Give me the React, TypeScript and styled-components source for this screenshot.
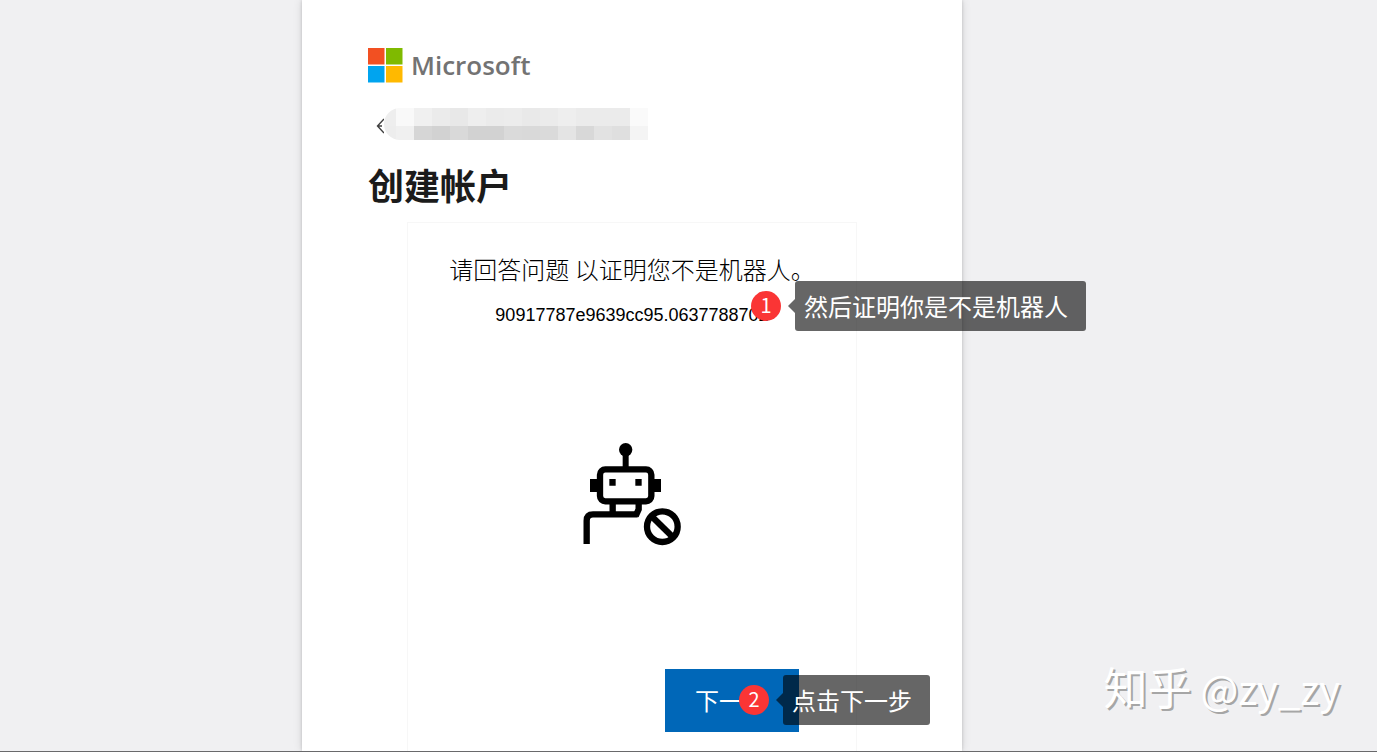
import React from "react";
import styled, { createGlobalStyle } from "styled-components";

const GlobalStyle = createGlobalStyle`
  *, *::before, *::after { box-sizing: border-box; }
  body {
    margin: 0;
    background: #f0f0f2;
    font-family: "Noto Sans CJK SC", "Noto Sans", sans-serif;
    color: #1b1b1b;
  }
`;

const Page = styled.div`
  position: relative;
  display: grid;
  grid-template-columns: 302fr minmax(auto, 660px) 415fr;
  min-height: 100vh;
  overflow: hidden;
  border-bottom: 1px solid #69696b;
`;

const Card = styled.main`
  grid-column: 2;
  display: flex;
  flex-direction: column;
  padding: 48px 66px 0;
  background: #fff;
  box-shadow: 0 0 3px rgba(0, 0, 0, 0.16), 0 0 9px rgba(0, 0, 0, 0.12);
`;

const Brand = styled.div`
  display: flex;
  align-items: center;
  gap: 8px;
  height: 34px;
`;

const BrandName = styled.span`
  font: 600 26px/34px "Open Sans", sans-serif;
  color: #737373;
`;

const Identity = styled.div`
  display: flex;
  align-items: center;
  height: 32px;
  margin-top: 26px;
  padding-left: 8px;
`;

const BackButton = styled.button`
  display: flex;
  padding: 4px 0 0;
  border: 0;
  background: none;
`;

const Redaction = styled.div`
  display: grid;
  grid-template-columns: 12px repeat(14, 18px);
  grid-template-rows: 18px 14px;
  overflow: hidden;
  border-radius: 16px 0 0 16px;
`;

const Cell = styled.span<{ $tone: string }>`
  background: ${(p) => p.$tone};
`;

const Title = styled.h1`
  margin: 18px 0 0;
  font-size: 36px;
  line-height: 52px;
  font-weight: 700;
`;

const Challenge = styled.section`
  position: relative;
  flex: 1;
  display: flex;
  flex-direction: column;
  align-items: center;
  margin: 12px 39px 0;
  padding: 28px 57px 19px;
  border: 1px solid #f7f7f7;
  border-bottom: 0;
  color: #000;
`;

const Question = styled.h2`
  margin: 0;
  font-size: 24px;
  line-height: 36px;
  font-weight: 300;
  white-space: nowrap;
`;

const Code = styled.p`
  margin: 16px 0 0;
  font: 18px/24px "Liberation Sans", Arial, sans-serif;
`;

const Robot = styled.svg`
  width: 100px;
  height: 104px;
  margin: 115px 0 123px;
`;

const NextButton = styled.button`
  position: relative;
  align-self: flex-end;
  width: 134px;
  height: 63px;
  padding: 0 30px 2px;
  border: 0;
  background: #0067b8;
  color: #fff;
  font: inherit;
  font-size: 24px;
  text-align: left;
  white-space: nowrap;
`;

const Callout = styled.span<{ $left: number; $top: number }>`
  position: absolute;
  left: ${(p) => p.$left}px;
  top: ${(p) => p.$top}px;
  z-index: 1;
  display: flex;
  align-items: center;
  color: #fff;
`;

const Badge = styled.span`
  width: 30px;
  height: 30px;
  margin-right: 7px;
  border-radius: 50%;
  background: #fa3535;
  font-size: 20px;
  line-height: 28px;
  text-align: center;
`;

const Pointer = styled.span`
  border: 7px solid transparent;
  border-left: 0;
  border-right-color: rgba(0, 0, 0, 0.6);
`;

const Bubble = styled.span`
  height: 50px;
  padding: 0 18px 0 9px;
  border-radius: 3px;
  background: rgba(0, 0, 0, 0.6);
  font-size: 24px;
  line-height: 50px;
  white-space: nowrap;
`;

const Watermark = styled.div`
  position: absolute;
  right: 37px;
  bottom: 33px;
  color: #fff;
  font-size: 40px;
  line-height: 60px;
  text-shadow: 2px 2px 0 #a6a6a6;
`;

const WatermarkSite = styled.span`
  font-size: 44px;
`;

const topTones = ["#eeeeee", "#f9f9f9", "#f0f0f0", "#ebebeb", "#e8e8e8", "#eeeeee", "#ebebeb", "#ececec", "#e9e9e9", "#ebebeb", "#eeeeee", "#ebebeb", "#ebebeb", "#ebebeb", "#fafafa"];
const bottomTones = ["#ededed", "#f0f0f0", "#d6d6d6", "#d2d2d2", "#d9d9d9", "#d2d2d2", "#d2d2d2", "#dadada", "#d9d9d9", "#dadada", "#e4e4e4", "#d8d8d8", "#e2e2e2", "#dfdfdf", "#f4f4f4"];

function Step({ n, text, left, top }: { n: number; text: string; left: number; top: number }) {
  return (
    <Callout $left={left} $top={top}>
      <Badge>{n}</Badge>
      <Pointer />
      <Bubble>{text}</Bubble>
    </Callout>
  );
}

export default function App() {
  return (
    <>
      <GlobalStyle />
      <Page>
        <Card>
          <Brand>
            <svg width="35" height="35" viewBox="0 0 35 35" aria-hidden="true">
              <path fill="#f25022" d="M0 0h16.5v16.5H0z" />
              <path fill="#7fba00" d="M18 0h16.5v16.5H18z" />
              <path fill="#00a4ef" d="M0 18h16.5v16.5H0z" />
              <path fill="#ffb900" d="M18 18h16.5v16.5H18z" />
            </svg>
            <BrandName>Microsoft</BrandName>
          </Brand>
          <Identity>
            <BackButton type="button" aria-label="返回">
              <svg width="8" height="16" viewBox="0 0 8 16" fill="none" stroke="#404040" strokeWidth="1.4">
                <path d="M8 1 1.5 8 8 15M1.5 8H6" />
              </svg>
            </BackButton>
            <Redaction>
              {[...topTones, ...bottomTones].map((tone, i) => (
                <Cell key={i} $tone={tone} />
              ))}
            </Redaction>
          </Identity>
          <Title>创建帐户</Title>
          <Challenge>
            <Question>请回答问题 以证明您不是机器人。</Question>
            <Code>90917787e9639cc95.0637788702</Code>
            <Robot viewBox="66 36 300 312" aria-hidden="true">
              <circle cx="197" cy="59" r="20" />
              <path d="M188 70h18v45h-18zM90 147h30v39H90zM274 147h29v39h-29zM148 147h19v20h-19zM226 147h19v20h-19z" />
              <g fill="none" stroke="#000" strokeWidth="19">
                <rect x="120" y="118" width="154" height="96" rx="16" />
                <path d="M158 214v40M80 342v-70q0-19 19-19h134" />
                <path d="M236 214v24l-9 20" />
                <circle cx="307" cy="290" r="46" />
                <path d="m274 258 65 64" />
              </g>
            </Robot>
            <NextButton type="button">
              下一
              <Step n={2} text="点击下一步" left={74} top={6} />
            </NextButton>
            <Step n={1} text="然后证明你是不是机器人" left={343} top={58} />
          </Challenge>
        </Card>
        <Watermark>
          <WatermarkSite>知乎</WatermarkSite> @zy_zy
        </Watermark>
      </Page>
    </>
  );
}
